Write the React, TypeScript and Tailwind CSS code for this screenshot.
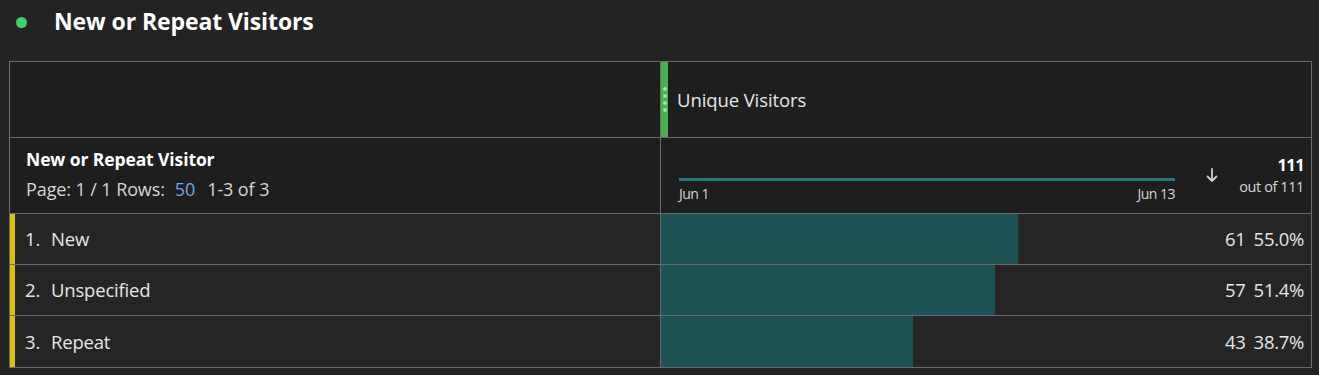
import React from "react";

type Row = { rank: number; label: string; value: number; pct: string };

const rows: Row[] = [
  { rank: 1, label: "New", value: 61, pct: "55.0%" },
  { rank: 2, label: "Unspecified", value: 57, pct: "51.4%" },
  { rank: 3, label: "Repeat", value: 43, pct: "38.7%" },
];

const total = 111;

const App: React.FC = () => {
  return (
    <div
      className="min-h-screen w-[1319px] h-[375px] bg-[#232323] text-[#e8e8e8]"
      style={{ fontFamily: '"Open Sans", "Noto Sans", sans-serif' }}
    >
      <header className="h-[61px] flex items-start pt-[4px] pl-[16px]">
        <span className="mt-[13px] w-[11px] h-[11px] rounded-full bg-[#3ed06b]" />
        <h1 className="ml-[27px] text-[23px] font-bold tracking-[-0.1px] text-white">
          New or Repeat Visitors
        </h1>
      </header>

      <div className="ml-[9px] w-[1303px] border border-[#6b6b6b] bg-[#1e1e1e]">
        {/* metric header */}
        <div className="grid grid-cols-[651px_1fr] h-[76px] border-b border-[#6b6b6b]">
          <div className="border-r border-[#6b6b6b]" />
          <div className="flex items-center">
            <div className="w-[7px] h-full bg-[#47b04f] flex flex-col items-center justify-center gap-[3px]">
              <span className="w-[4px] h-[4px] rounded-full bg-[#a9dcae]" />
              <span className="w-[4px] h-[4px] rounded-full bg-[#a9dcae]" />
              <span className="w-[4px] h-[4px] rounded-full bg-[#a9dcae]" />
              <span className="w-[4px] h-[4px] rounded-full bg-[#a9dcae]" />
            </div>
            <span className="ml-[9px] text-[18.5px] text-[#e6e6e6] tracking-[-0.1px]">Unique Visitors</span>
          </div>
        </div>

        {/* dimension header */}
        <div className="grid grid-cols-[651px_1fr] h-[76px] border-b border-[#6b6b6b]">
          <div className="border-r border-[#6b6b6b] pl-[16px] pt-[8px]">
            <div className="text-[17.5px] font-bold text-white tracking-[-0.1px]">New or Repeat Visitor</div>
            <div className="mt-[4px] text-[18px] text-[#d6d6d6] tracking-[-0.1px]">
              Page: 1 / 1 Rows:<span className="ml-[10px] text-[#6fa8dc]">50</span>
              <span className="ml-[12px]">1-3 of 3</span>
            </div>
          </div>
          <div className="flex items-start pl-[18px] pr-[7px]">
            <div className="w-[496px] mt-[40px]">
              <div className="h-[3px] bg-[#1f7b7d]" />
              <div className="mt-[2px] flex justify-between text-[14px] text-[#d6d6d6] tracking-[-0.5px]">
                <span>Jun 1</span>
                <span>Jun 13</span>
              </div>
            </div>
            <svg className="ml-[31px] mt-[30px]" width="12" height="15" viewBox="0 0 12 15" fill="none">
              <path d="M6 1v12M1.5 8.5L6 13l4.5-4.5" stroke="#cfcfcf" strokeWidth="1.8" strokeLinecap="round" strokeLinejoin="round" />
            </svg>
            <div className="ml-auto mt-[16px] text-right leading-[22px]">
              <div className="text-[16.5px] font-bold text-white tracking-[-0.6px]">111</div>
              <div className="text-[14.5px] text-[#d6d6d6] tracking-[-0.4px]">out of 111</div>
            </div>
          </div>
        </div>

        {/* rows */}
        {rows.map((r, i) => (
          <div
            key={r.rank}
            className={`grid grid-cols-[651px_1fr] h-[51px] bg-[#252525] ${
              i < rows.length - 1 ? "border-b border-[#6b6b6b]" : ""
            }`}
          >
            <div className="flex items-center border-r border-[#6b6b6b]">
              <div className="w-[5px] h-full bg-[#dcbf0c]" />
              <span className="ml-[10px] text-[18.5px] text-[#e6e6e6] tracking-[-0.2px]">
                {r.rank}.<span className="ml-[11px]">{r.label}</span>
              </span>
            </div>
            <div className="relative flex items-center justify-end pr-[7px]">
              <div
                className="absolute left-0 top-0 h-full bg-[#1c5254]"
                style={{ width: `${(r.value / total) * 650}px` }}
              />
              <span className="relative text-[18.5px] text-[#e6e6e6] tracking-[-0.3px]">
                {r.value}
                <span className="ml-[8px]">{r.pct}</span>
              </span>
            </div>
          </div>
        ))}
      </div>
    </div>
  );
};

export default App;
